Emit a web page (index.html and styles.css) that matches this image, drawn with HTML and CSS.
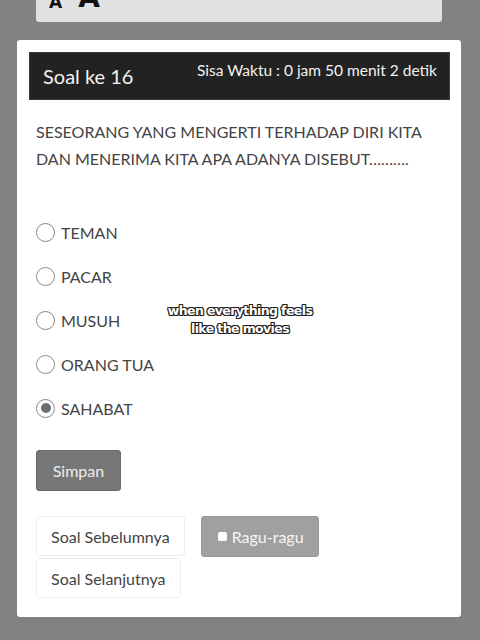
FILE: index.html
```html
<!DOCTYPE html>
<html>
<head>
<meta charset="utf-8">
<link rel="stylesheet" href="styles.css">
</head>
<body>
<div class="topbox">
  <span class="a-small">A</span>
  <span class="a-big">A</span>
</div>
<div class="card">
  <div class="header">
    <div class="title">Soal ke 16</div>
    <div class="timer">Sisa Waktu : 0 jam 50 menit 2 detik</div>
  </div>
  <div class="content">
    <p class="question">SESEORANG YANG MENGERTI TERHADAP DIRI KITA DAN MENERIMA KITA APA ADANYA DISEBUT……….</p>
    <ul class="options">
      <li class="option"><span class="radio"></span>TEMAN</li>
      <li class="option"><span class="radio"></span>PACAR</li>
      <li class="option"><span class="radio"></span>MUSUH</li>
      <li class="option"><span class="radio"></span>ORANG TUA</li>
      <li class="option"><span class="radio checked"></span>SAHABAT</li>
    </ul>
    <button class="btn btn-save">Simpan</button>
    <div class="nav">
      <button class="btn btn-light">Soal Sebelumnya</button>
      <button class="btn btn-doubt"><span class="box"></span>Ragu-ragu</button>
      <button class="btn btn-light">Soal Selanjutnya</button>
    </div>
  </div>
</div>
<div class="caption">when everything feels<br>like the movies</div>
</body>
</html>
```
FILE: styles.css
```css
html, body {
  margin: 0;
  padding: 0;
}
body {
  background: #828282;
  font-family: "Source Sans Pro", Lato, "Noto Sans", sans-serif;
  width: 480px;
  height: 640px;
  overflow: hidden;
  position: relative;
}
.topbox {
  margin: 0 38px 0 36px;
  height: 22px;
  background: #e1e1e1;
  border-radius: 0 0 3px 3px;
  overflow: hidden;
  display: flex;
  align-items: flex-end;
  gap: 16px;
  padding-left: 13px;
  box-sizing: border-box;
}
.a-small {
  font-family: "DejaVu Sans", sans-serif;
  font-weight: bold;
  font-size: 17px;
  line-height: 17px;
  color: #111;
  margin-bottom: 11px;
}
.a-big {
  font-family: "DejaVu Sans", sans-serif;
  font-weight: bold;
  font-size: 28px;
  line-height: 28px;
  color: #111;
  margin-bottom: 10px;
}
.card {
  margin: 18px 19px 0 17px;
  background: #fff;
  border-radius: 3px;
  padding: 12px 11px 19px 12px;
}
.header {
  background: #222;
  height: 48px;
  display: flex;
  justify-content: space-between;
  align-items: flex-start;
  padding: 0 12px 0 13px;
  color: #f2f2f2;
  border: 1px solid #3a3a3a;
  box-sizing: border-box;
}
.title {
  font-size: 20px;
  margin-top: 11px;
}
.timer {
  font-size: 15.5px;
  margin-top: 8px;
}
.content {
  padding: 0 7px;
}
.question {
  margin: 18px 0 0;
  font-size: 16px;
  line-height: 27px;
  color: #444;
  padding-right: 20px;
}
.options {
  list-style: none;
  margin: 38px 0 0;
  padding: 0;
}
.option {
  display: flex;
  align-items: center;
  height: 44px;
  font-size: 16px;
  color: #444;
}
.radio {
  width: 17px;
  height: 17px;
  border: 1px solid #8a8a8a;
  border-radius: 50%;
  margin-right: 6px;
  box-sizing: content-box;
  position: relative;
  background: #fff;
}
.radio.checked::after {
  content: "";
  position: absolute;
  left: 3.5px;
  top: 3.5px;
  width: 10px;
  height: 10px;
  border-radius: 50%;
  background: #6e6e6e;
}
.btn {
  font-family: inherit;
  font-size: 16px;
  border-radius: 3px;
  cursor: pointer;
  box-sizing: border-box;
}
.btn-save {
  margin-top: 20px;
  background: #777;
  color: #eee;
  border: 1px solid #6a6a6a;
  width: 85px;
  height: 41px;
  padding: 0;
}
.nav {
  margin-top: 25px;
  display: flex;
  flex-wrap: wrap;
  width: 300px;
  column-gap: 16px;
  row-gap: 1px;
}
.btn-light {
  background: #fff;
  color: #444;
  border: 1px solid #eee;
  height: 40px;
  padding: 0 14px;
}
.btn-doubt {
  background: #a0a0a0;
  color: #f5f5f5;
  border: 1px solid #999;
  height: 41px;
  padding: 0 14px 0 16px;
  display: flex;
  align-items: center;
}
.box {
  width: 9px;
  height: 9px;
  background: #fff;
  border-radius: 2px;
  margin-right: 5px;
}
.caption {
  position: absolute;
  left: 140px;
  top: 302px;
  width: 200px;
  text-align: center;
  font-family: "DejaVu Sans", sans-serif;
  font-weight: bold;
  font-size: 12.5px;
  line-height: 18px;
  letter-spacing: -0.6px;
  color: #fff;
  text-shadow: -1px -1px 0 #222, 1px -1px 0 #222, -1px 1px 0 #222, 1px 1px 0 #222, 0 1px 0 #222, 0 -1px 0 #222, 1px 0 0 #222, -1px 0 0 #222;
}
```
